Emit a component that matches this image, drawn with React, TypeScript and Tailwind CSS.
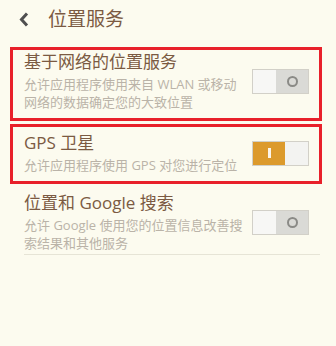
import { ReactNode } from "react";

function Toggle({ on }: { on: boolean }) {
  return (
    <div className="flex w-[57px] h-[25px] border border-[#d2d0c8] shrink-0">
      {on ? (
        <>
          <div className="w-[32px] bg-[#dc9a2c] flex items-center justify-center">
            <div className="w-[3px] h-[10px] bg-white/90" />
          </div>
          <div className="flex-1 bg-[#f3f3f1]" />
        </>
      ) : (
        <>
          <div className="flex-1 bg-[#f7f7f5]" />
          <div className="w-[32px] bg-[#dadad6] flex items-center justify-center">
            <div className="w-[11px] h-[11px] rounded-full border-2 border-[#8a8a86]" />
          </div>
        </>
      )}
    </div>
  );
}

function Item({
  title,
  desc,
  on,
  className,
  children,
}: {
  title: string;
  desc: ReactNode;
  on: boolean;
  className: string;
  children?: ReactNode;
}) {
  return (
    <div className={className}>
      <div className="flex items-center">
        <div className="flex-1">
          <div className="text-[17px] leading-[22px] text-[#7b5a42]">{title}</div>
          <div className="text-[13px] leading-[18px] text-[#bab3a8] mt-[2px]">{desc}</div>
        </div>
        <Toggle on={on} />
      </div>
      {children}
    </div>
  );
}

export default function App() {
  return (
    <div
      className="w-[336px] h-[346px] bg-[#fcfbef] overflow-hidden"
      style={{ fontFamily: '"Open Sans", "Noto Sans CJK SC", sans-serif' }}
    >
      {/* Header */}
      <div className="h-[47px] flex items-center pl-[19px] pb-[8px]">
        <svg width="10" height="15" viewBox="0 0 10 15" className="mr-[19px]">
          <polyline points="8,1.5 2.5,7.5 8,13.5" fill="none" stroke="#4f4f4f" strokeWidth="3" />
        </svg>
        <span className="text-[19px] text-[#7b5a42]">位置服务</span>
      </div>

      <div className="pl-[10px] pr-[14px]">
        <Item
          title="基于网络的位置服务"
          desc={
            <>
              允许应用程序使用来自 WLAN 或移动
              <br />
              网络的数据确定您的大致位置
            </>
          }
          on={false}
          className="border-[3px] border-[#e8202a] pl-[11px] pr-[10px] pt-[1px] pb-[7px]"
        />
        <Item
          title="GPS 卫星"
          desc="允许应用程序使用 GPS 对您进行定位"
          on={true}
          className="mt-[3px] border-[3px] border-[#e8202a] pl-[11px] pr-[10px] pt-[5px] pb-[7px]"
        />
        <Item
          title="位置和 Google 搜索"
          desc={
            <>
              允许 Google 使用您的位置信息改善搜
              <br />
              索结果和其他服务
            </>
          }
          on={false}
          className="pl-[14px] pr-[13px] pt-[8px]"
        >
          <div className="mt-[2px] mr-[-11px] h-px bg-[#e6e4d6]" />
        </Item>
      </div>
    </div>
  );
}
